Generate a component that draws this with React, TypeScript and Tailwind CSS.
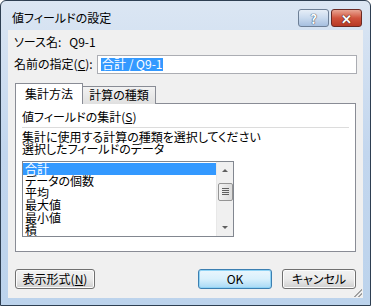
import React from 'react';

const font = "font-['MS_UI_Gothic','Noto_Sans_CJK_JP',sans-serif] [font-feature-settings:'palt']";

function WinButton({ label, primary = false, className = '' }: { label: React.ReactNode; primary?: boolean; className?: string }) {
  return (
    <div
      className={`h-[20px] flex items-center justify-center rounded-[3px] border text-[12px] leading-none text-black ${
        primary
          ? 'border-[#3c7fb1] bg-gradient-to-b from-[#eaf6fd] via-[#d9f0fc] to-[#a7d9f5] shadow-[inset_0_0_0_1px_#8fd3f5]'
          : 'border-[#707070] bg-gradient-to-b from-[#f2f2f2] via-[#ebebeb] to-[#cfcfcf] shadow-[inset_0_0_0_1px_#fcfcfc]'
      } ${className}`}
    >
      {label}
    </div>
  );
}

function ScrollBar() {
  return (
    <div className="w-[17px] h-full flex flex-col items-center bg-[#f0f0f0] border-l border-[#e8e8e8]">
      <div className="h-[17px] w-full flex items-center justify-center">
        <div className="w-0 h-0 border-l-[3px] border-r-[3px] border-b-[3px] border-l-transparent border-r-transparent border-b-[#606060]" />
      </div>
      <div className="mt-[4px] w-[15px] h-[18px] rounded-[2px] border border-[#959595] bg-gradient-to-r from-[#f3f3f3] to-[#dcdcdc] flex flex-col items-center justify-center gap-[1px]">
        <div className="w-[7px] h-[1px] bg-[#606060]" />
        <div className="w-[7px] h-[1px] bg-[#606060]" />
        <div className="w-[7px] h-[1px] bg-[#606060]" />
        <div className="w-[7px] h-[1px] bg-[#606060]" />
      </div>
      <div className="flex-1" />
      <div className="h-[17px] w-full flex items-center justify-center">
        <div className="w-0 h-0 border-l-[3px] border-r-[3px] border-t-[3px] border-l-transparent border-r-transparent border-t-[#606060]" />
      </div>
    </div>
  );
}

const items = ['合計', 'データの個数', '平均', '最大値', '最小値', '積'];

export default function App() {
  return (
    <div className={`w-[371px] h-[306px] bg-white ${font}`}>
      <div className="w-[371px] h-[306px] border border-[#2e3f52] rounded-t-[6px] bg-gradient-to-b from-[#dbe6f3] via-[#c2d6ee] to-[#bcd3ec] flex flex-col">
        {/* title bar */}
        <div className="h-[29px] flex items-start">
          <div className="pl-[11px] pt-[10px] text-[12px] leading-[13px] text-black">値フィールドの設定</div>
          <div className="flex-1" />
          <div className="mt-[8px] w-[31px] h-[18px] rounded-[3px] border border-[#6d7f96] bg-gradient-to-b from-[#e6eef7] via-[#c9daee] to-[#a6bfdf] flex items-center justify-center text-[13px] font-bold leading-none text-white [text-shadow:0_0_1px_#2a3b55,0_0_1px_#2a3b55]">
            ?
          </div>
          <div className="mt-[8px] ml-[2px] mr-[8px] w-[31px] h-[18px] rounded-[3px] border border-[#6b2a24] bg-gradient-to-b from-[#e8a493] via-[#d0533d] to-[#b73a26] flex items-center justify-center text-[13px] font-bold leading-none text-white [text-shadow:0_0_1px_#3a0f08,0_0_1px_#3a0f08]">
            ✕
          </div>
        </div>
        {/* client */}
        <div className="ml-[7px] w-[355px] h-[268px] bg-[#f0f0f0] flex flex-col text-[12px] leading-[12px] text-black">
          <div className="mt-[6px] ml-[6px] h-[13px] flex items-center">
            <span>ソース名:</span>
            <span className="ml-[8px]">Q9-1</span>
          </div>
          <div className="mt-[6px] ml-[6px] h-[19px] flex items-center">
            <span className="w-[83px]">名前の指定(<span className="underline">C</span>):</span>
            <div className="w-[260px] h-[19px] border border-[#abadb3] bg-white flex items-center pl-[3px]">
              <span className="bg-[#3399ff] text-white h-[13px] px-[1px] flex items-center whitespace-pre">合計 / Q9-1</span>
            </div>
          </div>
          {/* tabs */}
          <div className="mt-[9px] ml-[7px] h-[20px] flex items-end relative z-10">
            <div className="h-[21px] w-[68px] border border-b-0 border-[#898c95] bg-white flex items-center justify-center mb-[-1px]">
              集計方法
            </div>
            <div className="h-[18px] w-[73px] border border-l-0 border-b-0 border-[#898c95] bg-gradient-to-b from-[#f2f2f2] to-[#e0e0e0] flex items-center justify-center mb-[-1px]">
              計算の種類
            </div>
          </div>
          <div className="ml-[7px] w-[341px] h-[151px] border border-[#898c95] bg-white flex flex-col px-[6px]">
            <div className="mt-[7px] h-[13px] flex items-center">
              値フィールドの集計(<span className="underline">S</span>)
            </div>
            <div className="mt-[3px] h-[1px] bg-[#dcdcdc]" />
            <div className="mt-[3px] h-[12px] flex items-center">集計に使用する計算の種類を選択してください</div>
            <div className="h-[12px] flex items-center">選択したフィールドのデータ</div>
            <div className="mt-[6px] w-[212px] h-[76px] border border-[#828790] bg-white flex">
              <div className="flex-1 flex flex-col pt-[1px]">
                {items.map((it, i) => (
                  <div
                    key={it}
                    className={`h-[12.3px] flex items-center pl-[2px] ${i === 0 ? 'bg-[#3399ff] text-white' : ''}`}
                  >
                    {it}
                  </div>
                ))}
              </div>
              <ScrollBar />
            </div>
          </div>
          {/* buttons */}
          <div className="mt-[17px] ml-[7px] mr-[7px] flex items-center">
            <WinButton className="w-[80px]" label={<span>表示形式(<span className="underline">N</span>)</span>} />
            <div className="flex-1" />
            <WinButton primary className="w-[74px]" label="OK" />
            <WinButton className="w-[74px] ml-[10px]" label="キャンセル" />
          </div>
          <div className="flex-1 flex items-end justify-end pr-[1px] pb-[1px]">
            <div className="w-[8px] h-[8px] bg-[linear-gradient(135deg,transparent_50%,#a0a0a0_50%,#a0a0a0_60%,transparent_60%,transparent_75%,#a0a0a0_75%,#a0a0a0_85%,transparent_85%)]" />
          </div>
        </div>
      </div>
    </div>
  );
}
